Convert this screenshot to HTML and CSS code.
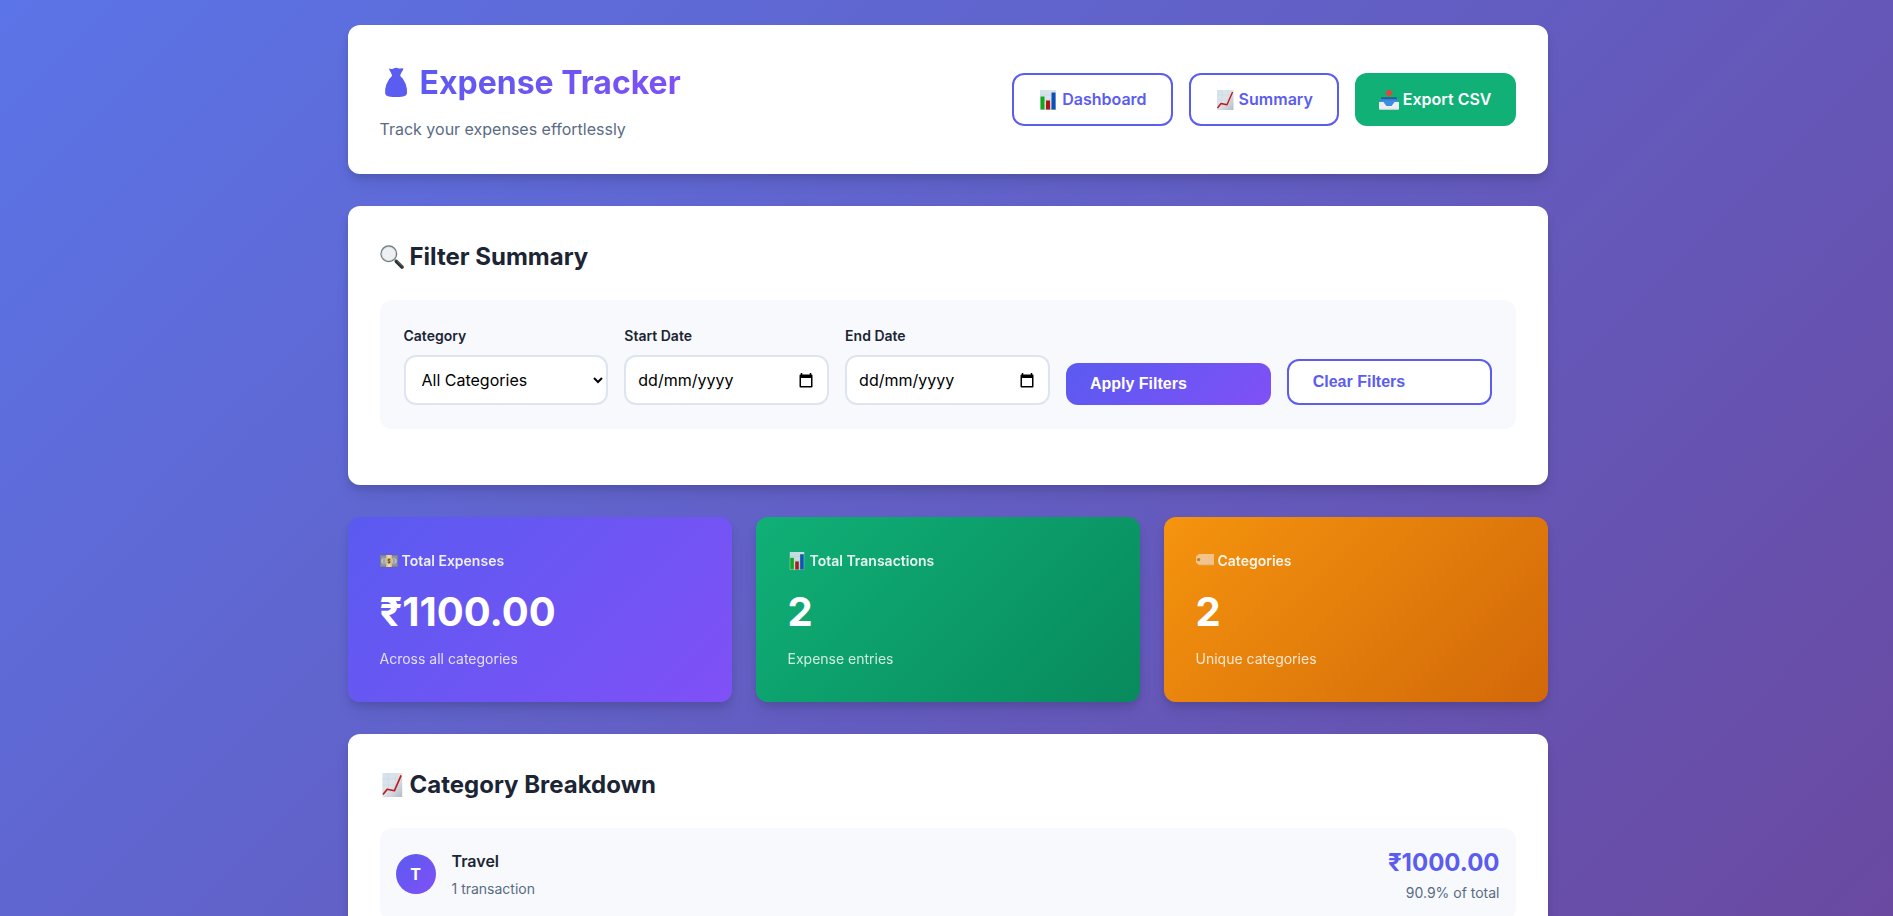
FILE: index.html
```html
<!DOCTYPE html>
<html lang="en-GB">
<head>
<meta charset="utf-8">
<title>Expense Tracker</title>
<link rel="stylesheet" href="styles.css">
</head>
<body>
<svg class="sprite" aria-hidden="true">
  <defs>
    <linearGradient id="paper" x1="0" y1="0" x2="1" y2="1"><stop offset="0" stop-color="#d3e2ec"/><stop offset=".5" stop-color="#dde4ea"/><stop offset="1" stop-color="#b4bcc4"/></linearGradient>
    <linearGradient id="blue" x1="0" y1="0" x2="0" y2="1"><stop offset="0" stop-color="#2a6fc4"/><stop offset="1" stop-color="#4aa0f5"/></linearGradient>
    <linearGradient id="handle" x1="0" y1="1" x2="1" y2="0"><stop offset="0" stop-color="#111"/><stop offset="1" stop-color="#555b60"/></linearGradient>
  </defs>
  <symbol id="bars" viewBox="0 0 20 20">
    <rect x="2" y="0" width="16" height="20" fill="url(#paper)"/>
    <path d="M2 5h16M2 10h16M2 15h16" stroke="#c3cdd6" stroke-width=".5"/>
    <rect x="2.500" y="6.500" width="4" height="13" fill="#12a81c"/>
    <rect x="8" y="10.500" width="4" height="9" fill="#b01515"/>
    <rect x="13.500" y="2.500" width="4" height="17" fill="#0c50b8"/>
  </symbol>
  <symbol id="trend" viewBox="0 0 20 20">
    <rect x="2" y="0" width="16.500" height="20" fill="url(#paper)"/>
    <path d="M2 5h16M2 10h16M2 15h16M7 0v20M13 0v20" stroke="#c9d3da" stroke-width=".4"/>
    <path d="M2.500 18 6 13.500l6 1.300L17.600 2" fill="none" stroke="#c4161c" stroke-width="1.400" stroke-linejoin="round"/>
  </symbol>
  <symbol id="inbox" viewBox="0 0 20 20">
    <path d="M2.500 7.500h15L20 13.500H0z" fill="url(#blue)"/>
    <path d="M2.500 7.500h15l.5 1.300H2z" fill="#2b4f7c"/>
    <path d="M0 12h4.500l3 3.500h5l3-3.500H20v6.500q0 1.300-1.300 1.300H1.300Q0 19.800 0 18.500z" fill="#eceef0"/>
    <path d="M.3 19.300h19.400" stroke="#bfc5ca" stroke-width=".7"/>
    <path d="M4 11h12l-3.500 5h-5z" fill="#3b8ee8"/>
    <path d="M8 0h4v2.500h2.300L10 6.800 5.700 2.500H8z" fill="#ef3e36"/>
  </symbol>
  <symbol id="search" viewBox="0 0 24 24">
    <circle cx="8.800" cy="8.800" r="7.800" fill="#eef1f3" stroke="#6d7880" stroke-width="1.300"/>
    <circle cx="8.800" cy="8.800" r="6.900" fill="none" stroke="#c6ccd0" stroke-width=".6"/>
    <path d="m14.300 14.300 2 2" stroke="#9aa1a6" stroke-width="2"/>
    <path d="m16.500 16.500 5.500 5.500" stroke="url(#handle)" stroke-width="3.600" stroke-linecap="round"/>
    <path d="m17 15.800 5.500 5" stroke="#777" stroke-width=".7"/>
  </symbol>
  <symbol id="cash" viewBox="0 0 18 18">
    <rect x="0" y="3" width="18" height="12" fill="#7f8580"/>
    <rect x="1" y="4" width="16" height="10" fill="#959c94"/>
    <circle cx="4" cy="9" r="2.800" fill="#c6c9c2"/><circle cx="14" cy="9" r="2.800" fill="#c6c9c2"/>
    <path d="M4 7v4M14 7v4" stroke="#888d88" stroke-width="1"/>
    <rect x="6" y="3" width="6" height="12" fill="#f0c95c"/>
    <rect x="7.500" y="3" width="3" height="12" fill="#fae9ad"/>
    <circle cx="9" cy="9" r="2.600" fill="#d8c27c"/>
    <path d="M10.300 7.500q-1.300-.8-2.200 0t.9 1.500.9 1.500-2.200 0M9 6.400v5.200" fill="none" stroke="#4d4528" stroke-width=".8"/>
  </symbol>
  <symbol id="tag" viewBox="0 0 18 18">
    <path d="M3 2h15v11H3L0 10.500v-6z" fill="#f3cb9a"/>
    <path d="M3 13h15" stroke="#e0ab6c" stroke-width=".8"/>
    <circle cx="2.600" cy="7.600" r="1.700" fill="#b97d3f"/>
  </symbol>
  <symbol id="calendar" viewBox="0 0 14 15">
    <path d="M2.500 0v2M11.500 0v2" stroke="#000" stroke-width="1.500"/>
    <path fill-rule="evenodd" d="M1.500 1.500h11q1 0 1 1v11q0 1-1 1h-11q-1 0-1-1v-11q0-1 1-1zM2 5v8h10V5z" fill="#000"/>
  </symbol>
</svg>

<div class="container">
  <header class="card header">
    <div>
      <h1 class="brand">
        <svg class="brand-icon" viewBox="0 0 32 32" aria-hidden="true"><path d="M9 1.500q2 .8 4 .2 2-1 4.500-.8 1.500 1 3 .6 1.500-.6 3 0-.4 1.700-1.900 3.700-1.300 1.900-1.400 3.900 3.800 2.900 5.500 8 1.900 5.900 1.300 9.300-.5 2.400-3.800 3-7.200 1-14.400 0-3.200-.6-3.700-3-.5-3.600 1.400-9.300 1.800-5.100 5.500-8-.1-2-1.300-3.900Q9.300 3.200 9 1.500z" fill="#5b5cf0"/></svg>
        <span class="brand-name">Expense Tracker</span>
      </h1>
      <p class="tagline">Track your expenses effortlessly</p>
    </div>
    <nav class="nav">
      <a class="nav-btn" href="#dashboard"><svg class="icon-20" aria-hidden="true"><use href="#bars"/></svg>Dashboard</a>
      <a class="nav-btn" href="#summary"><svg class="icon-20" aria-hidden="true"><use href="#trend"/></svg>Summary</a>
      <a class="nav-btn nav-btn-success" href="#export"><svg class="icon-20" aria-hidden="true"><use href="#inbox"/></svg>Export CSV</a>
    </nav>
  </header>

  <section class="card">
    <h2 class="title"><svg class="icon-24" aria-hidden="true"><use href="#search"/></svg>Filter Summary</h2>
    <form class="filters">
      <div class="field">
        <label for="category">Category</label>
        <select id="category" class="control"><option>All Categories</option></select>
      </div>
      <div class="field">
        <label for="start">Start Date</label>
        <div class="date">
          <input id="start" class="control" type="text" inputmode="numeric" placeholder="dd/mm/yyyy">
          <button class="date-btn" type="button" aria-label="Pick start date"><svg class="date-icon" aria-hidden="true"><use href="#calendar"/></svg></button>
        </div>
      </div>
      <div class="field">
        <label for="end">End Date</label>
        <div class="date">
          <input id="end" class="control" type="text" inputmode="numeric" placeholder="dd/mm/yyyy">
          <button class="date-btn" type="button" aria-label="Pick end date"><svg class="date-icon" aria-hidden="true"><use href="#calendar"/></svg></button>
        </div>
      </div>
      <button class="btn btn-primary" type="submit">Apply Filters</button>
      <button class="btn btn-outline" type="reset">Clear Filters</button>
    </form>
  </section>

  <section class="stats">
    <article class="stat stat-primary">
      <h3 class="stat-label"><svg class="icon-18" aria-hidden="true"><use href="#cash"/></svg>Total Expenses</h3>
      <p class="stat-value">₹1100.00</p>
      <p class="stat-note">Across all categories</p>
    </article>
    <article class="stat stat-success">
      <h3 class="stat-label"><svg class="icon-18" aria-hidden="true"><use href="#bars"/></svg>Total Transactions</h3>
      <p class="stat-value">2</p>
      <p class="stat-note">Expense entries</p>
    </article>
    <article class="stat stat-warning">
      <h3 class="stat-label"><svg class="icon-18" aria-hidden="true"><use href="#tag"/></svg>Categories</h3>
      <p class="stat-value">2</p>
      <p class="stat-note">Unique categories</p>
    </article>
  </section>

  <section class="card">
    <h2 class="title"><svg class="icon-24" aria-hidden="true"><use href="#trend"/></svg>Category Breakdown</h2>
    <ul class="breakdown">
      <li class="row">
        <span class="avatar">T</span>
        <div class="row-main">
          <h4 class="row-name">Travel</h4>
          <p class="row-note">1 transaction</p>
        </div>
        <div class="row-total">
          <p class="row-amount">₹1000.00</p>
          <p class="row-note">90.9% of total</p>
        </div>
      </li>
    </ul>
  </section>
</div>
</body>
</html>
```
FILE: styles.css
```css
:root {
  --primary: #5b5cf0;
  --primary-gradient: linear-gradient(135deg, #5a5bf0 0%, #8050f6 100%);
  --success: #10b077;
  --dark: #1b2534;
  --muted: #596b83;
  --surface: #f8f9fd;
  --border: #dee5f0;
  --shadow: 0 10px 15px -3px rgba(0, 0, 0, 0.1), 0 4px 6px rgba(0, 0, 0, 0.08);
}

* {
  box-sizing: border-box;
  margin: 0;
  padding: 0;
}

body {
  min-height: 100vh;
  padding: 25px 20px 32px 22px;
  background: linear-gradient(135deg, #5b74e7 0%, #6a489f 100%);
  color: var(--dark);
  font-family: Inter, "Liberation Sans", sans-serif;
  font-size: 16px;
  line-height: 25px;
}

.sprite {
  position: absolute;
  width: 0;
  height: 0;
}

.container {
  max-width: 1200px;
  margin: 0 auto;
  display: flex;
  flex-direction: column;
  gap: 32px;
}

.card {
  padding: 32px;
  border-radius: 12px;
  background: #fff;
  box-shadow: var(--shadow);
}

.icon-18 { width: 18px; height: 18px; flex: none; }
.icon-20 { width: 20px; height: 20px; flex: none; }
.icon-24 { width: 24px; height: 24px; flex: none; }

.header {
  display: flex;
  flex-wrap: wrap;
  justify-content: space-between;
  align-items: center;
  gap: 16px;
}

.brand {
  display: flex;
  align-items: center;
  gap: 8px;
  margin-bottom: 8px;
  font-size: 32px;
  font-weight: 700;
  line-height: 52px;
}

.brand-icon {
  width: 32px;
  height: 32px;
}

.brand-name {
  background: var(--primary-gradient);
  background-clip: text;
  -webkit-background-clip: text;
  color: transparent;
}

.tagline {
  color: var(--muted);
}

.nav {
  display: flex;
  flex-wrap: wrap;
  gap: 16px;
}

.nav-btn {
  display: flex;
  align-items: center;
  gap: 4px;
  padding: 12px 24px;
  border: 2px solid var(--primary);
  border-radius: 12px;
  background: #fff;
  color: var(--primary);
  font-weight: 600;
  text-decoration: none;
}

.nav-btn-success {
  border: 0;
  background: var(--success);
  color: #fff;
}

.title {
  display: flex;
  align-items: center;
  gap: 6px;
  margin-bottom: 24px;
  font-size: 24px;
  font-weight: 700;
  line-height: 38px;
}

.filters {
  display: grid;
  grid-template-columns: repeat(auto-fit, minmax(180px, 1fr));
  gap: 16px;
  align-items: end;
  margin-bottom: 24px;
  padding: 24px;
  border-radius: 12px;
  background: var(--surface);
}

.field {
  display: flex;
  flex-direction: column;
  gap: 8px;
}

.field label {
  font-size: 14px;
  font-weight: 600;
  line-height: 23px;
}

.control {
  display: block;
  width: 100%;
  height: 50px;
  padding: 12px;
  border: 2px solid var(--border);
  border-radius: 12px;
  background: #fff;
  color: #000;
  font-family: inherit;
  font-size: 16px;
}

.control::placeholder {
  color: #000;
  opacity: 1;
}

.date {
  position: relative;
}

.date-btn {
  position: absolute;
  top: 0;
  right: 16px;
  display: flex;
  align-items: center;
  height: 100%;
  border: 0;
  background: none;
}

.date-icon {
  width: 14px;
  height: 15px;
}

.btn {
  padding: 12px 24px;
  border-radius: 12px;
  font-family: "Liberation Sans", Arial, sans-serif;
  font-size: 16px;
  font-weight: 600;
  line-height: 18px;
  text-align: left;
}

.btn-primary {
  border: 0;
  background: var(--primary-gradient);
  color: #fff;
}

.btn-outline {
  border: 2px solid var(--primary);
  background: #fff;
  color: var(--primary);
}

.stats {
  display: grid;
  grid-template-columns: repeat(auto-fit, minmax(250px, 1fr));
  gap: 24px;
}

.stat {
  padding: 32px;
  border-radius: 12px;
  box-shadow: var(--shadow);
  color: #fff;
}

.stat-primary { background: var(--primary-gradient); }
.stat-success { background: linear-gradient(135deg, #10b077 0%, #088a5c 100%); }
.stat-warning { background: linear-gradient(135deg, #f5940e 0%, #d26809 100%); }

.stat-label {
  display: flex;
  align-items: center;
  gap: 4px;
  margin-bottom: 8px;
  font-size: 14px;
  font-weight: 600;
  line-height: 23px;
  opacity: 0.9;
}

.stat-value {
  margin-bottom: 4px;
  font-size: 40px;
  font-weight: 700;
  line-height: 64px;
}

.stat-note {
  font-size: 14px;
  line-height: 22px;
  opacity: 0.8;
}

.breakdown {
  list-style: none;
}

.row {
  display: flex;
  align-items: center;
  gap: 16px;
  padding: 16px;
  border-radius: 12px;
  background: var(--surface);
}

.avatar {
  display: flex;
  align-items: center;
  justify-content: center;
  width: 40px;
  height: 40px;
  border-radius: 50%;
  background: var(--primary-gradient);
  color: #fff;
  font-weight: 700;
}

.row-main {
  flex: 1;
}

.row-name {
  margin-bottom: 4px;
  font-size: 16px;
  font-weight: 600;
}

.row-note {
  color: var(--muted);
  font-size: 14px;
  line-height: 22px;
}

.row-total {
  text-align: right;
}

.row-amount {
  color: var(--primary);
  font-size: 24px;
  font-weight: 700;
  line-height: 38px;
}
```
